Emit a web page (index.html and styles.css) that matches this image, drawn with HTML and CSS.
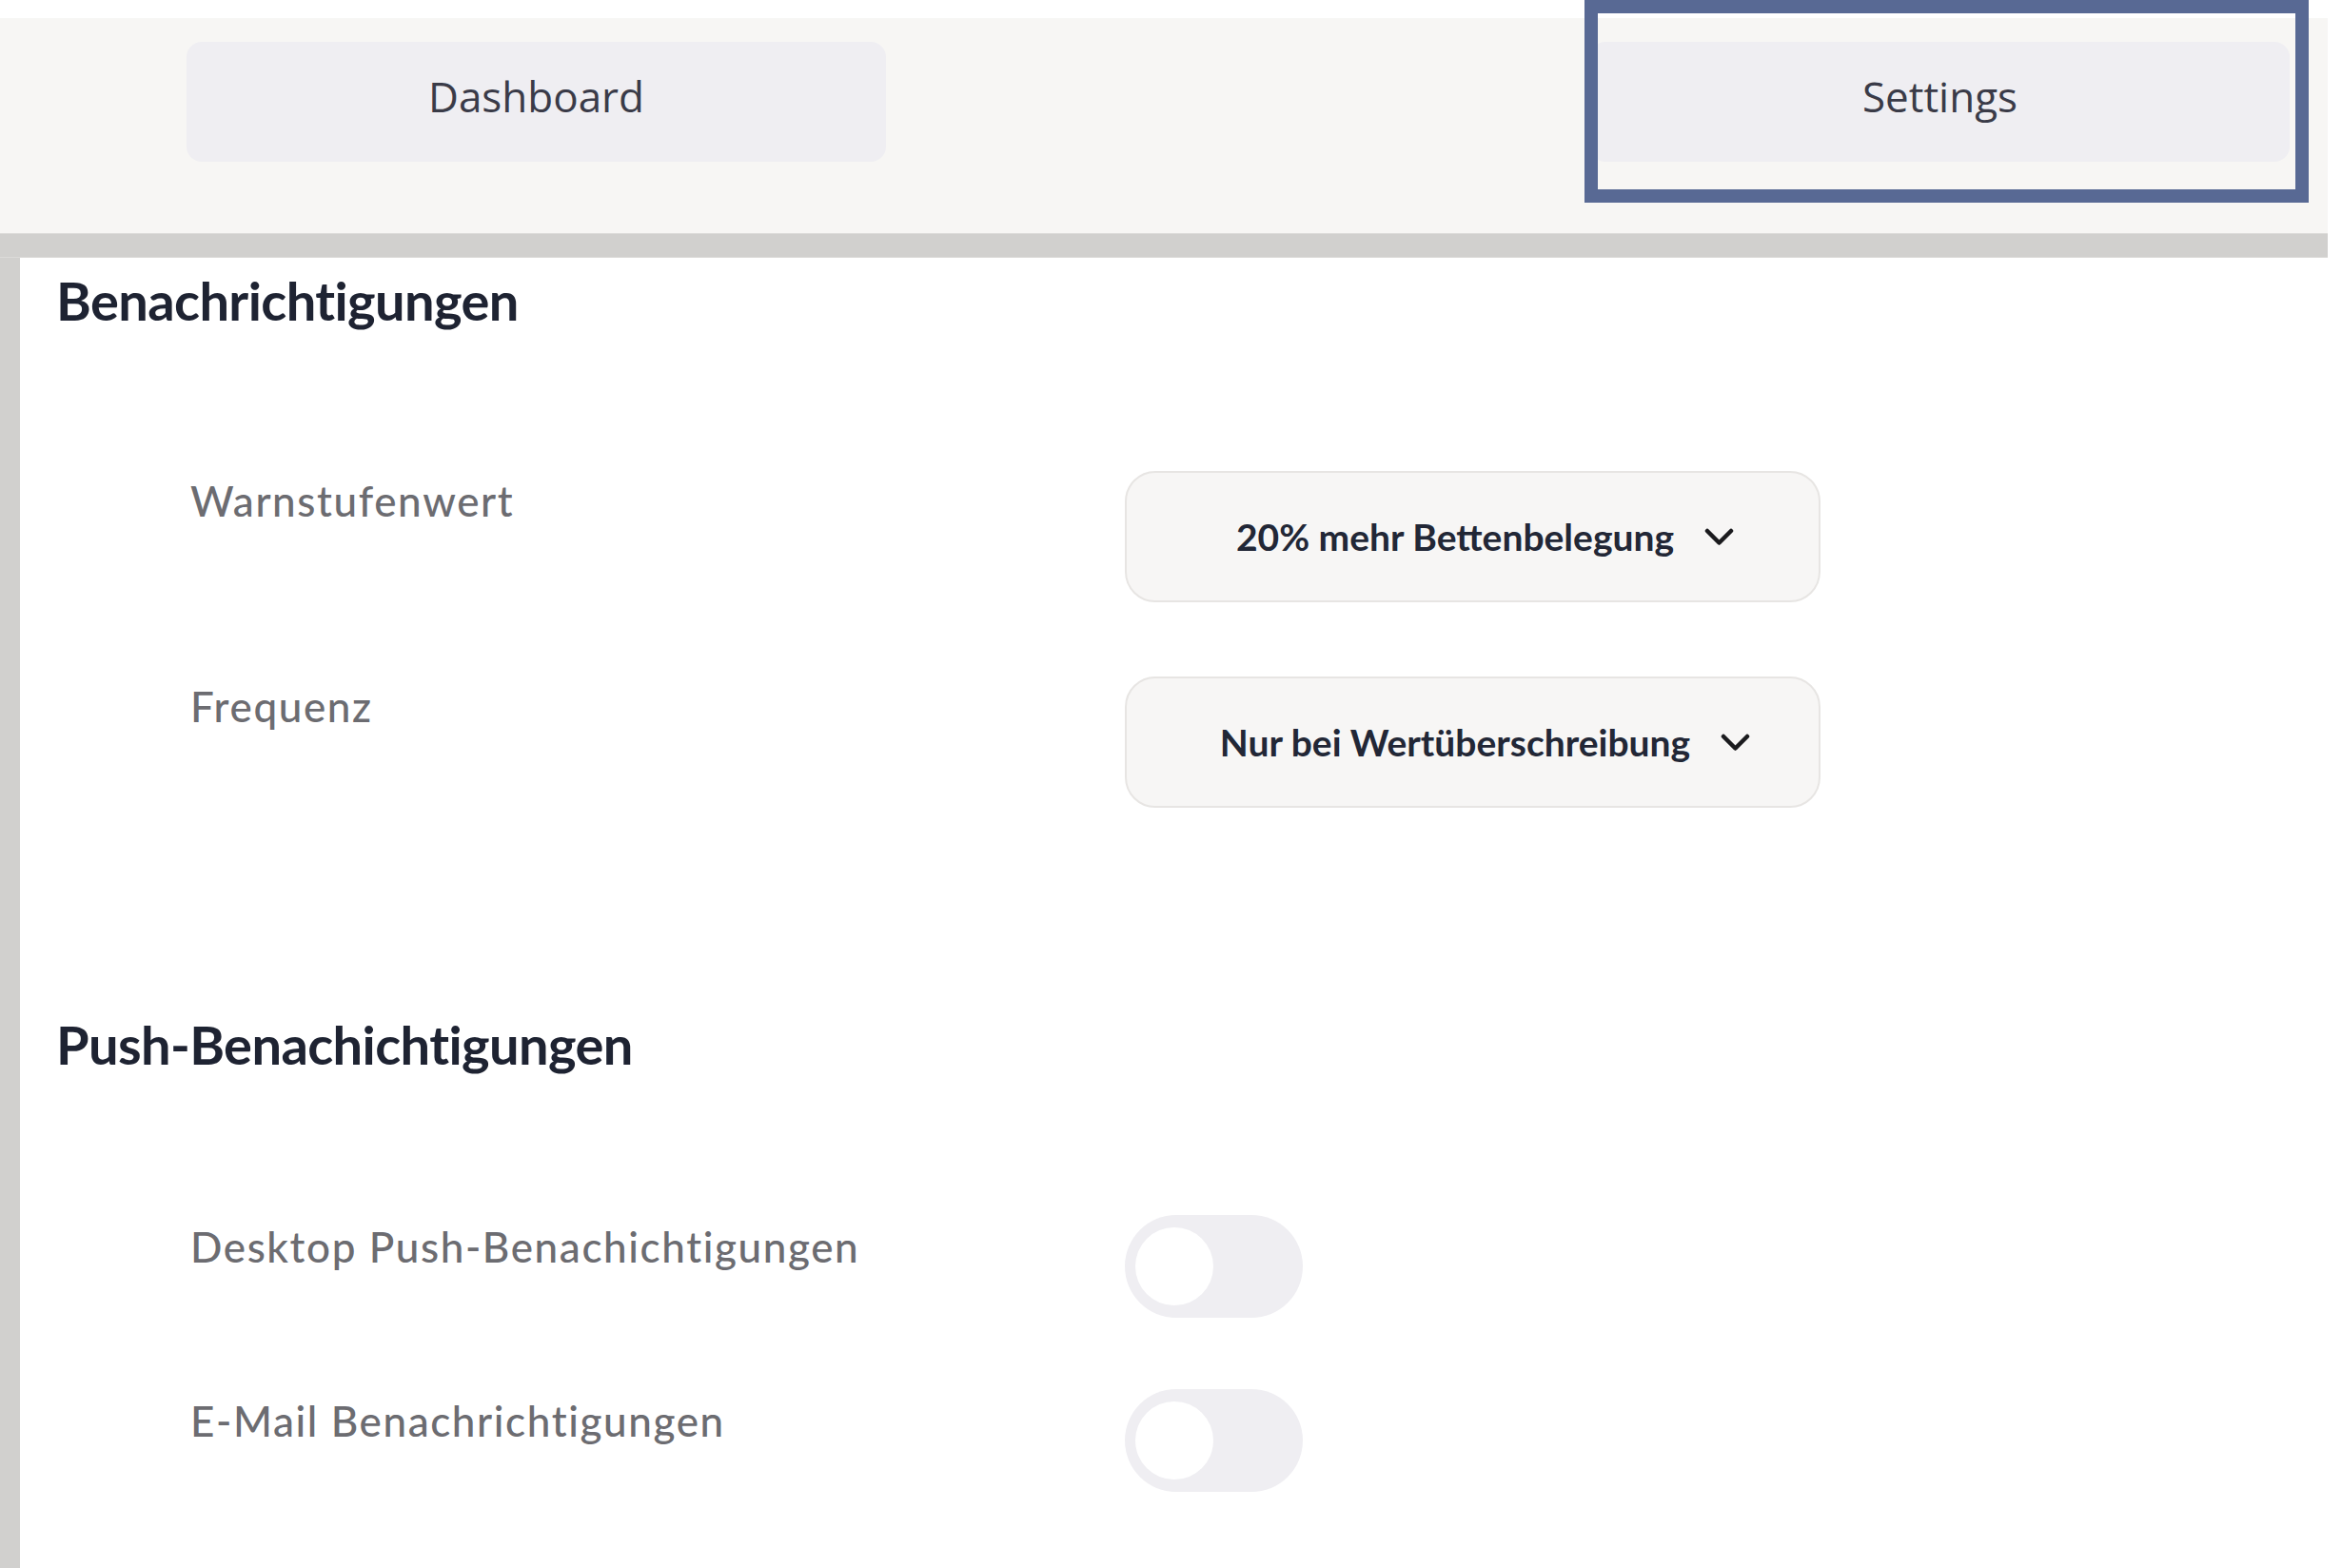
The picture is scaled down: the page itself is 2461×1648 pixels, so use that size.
FILE: index.html
```html
<!DOCTYPE html>
<html lang="de">
<head>
<meta charset="utf-8">
<title>Einstellungen</title>
<link rel="stylesheet" href="styles.css">
</head>
<body>
  <header class="topbar">
    <nav class="tabs">
      <button class="tab">Dashboard</button>
      <button class="tab tab-settings">Settings</button>
    </nav>
  </header>
  <div class="focus-ring"></div>
  <div class="divider"></div>

  <main class="content">
    <section class="group group-alerts">
      <h2 class="group-title">Benachrichtigungen</h2>

      <div class="setting-row">
        <span class="setting-label">Warnstufenwert</span>
        <div class="select">
          <span class="select-value">20% mehr Bettenbelegung</span>
          <svg class="chevron" width="31" height="19" viewBox="0 0 31 19"><polyline points="3,3 15.5,15.5 28,3" fill="none" stroke="#1b1b1e" stroke-width="4.5" stroke-linecap="round" stroke-linejoin="round"/></svg>
        </div>
      </div>

      <div class="setting-row">
        <span class="setting-label">Frequenz</span>
        <div class="select">
          <span class="select-value">Nur bei Wertüberschreibung</span>
          <svg class="chevron" width="31" height="19" viewBox="0 0 31 19"><polyline points="3,3 15.5,15.5 28,3" fill="none" stroke="#1b1b1e" stroke-width="4.5" stroke-linecap="round" stroke-linejoin="round"/></svg>
        </div>
      </div>
    </section>

    <section class="group group-push">
      <h2 class="group-title">Push-Benachichtigungen</h2>

      <div class="setting-row toggle-row">
        <span class="setting-label">Desktop Push-Benachichtigungen</span>
        <span class="switch"><span class="knob"></span></span>
      </div>

      <div class="setting-row toggle-row">
        <span class="setting-label">E-Mail Benachrichtigungen</span>
        <span class="switch"><span class="knob"></span></span>
      </div>
    </section>
  </main>
</body>
</html>
```

FILE: styles.css
```css
html, body {
  margin: 0;
  padding: 0;
  background: #ffffff;
}

body {
  position: relative;
  font-family: "Lato", "Noto Sans", sans-serif;
  min-height: 1648px;
}

/* ---- top navigation ---- */
.topbar {
  margin-top: 19px;
  margin-right: 15px;
  height: 226px;
  background: #f7f6f4;
  box-sizing: border-box;
  padding-top: 25px;
  padding-left: 196px;
}

.tabs {
  display: flex;
  gap: 740px;
}

.tab {
  width: 735px;
  height: 126px;
  border: none;
  border-radius: 16px;
  background: #efeef2;
  font-family: "Open Sans", "Noto Sans", sans-serif;
  font-size: 44px;
  font-weight: 400;
  color: #3a3b48;
  padding: 0 0 13px 0;
}

/* highlight frame around the active tab */
.focus-ring {
  position: absolute;
  left: 1665px;
  top: 0;
  width: 761px;
  height: 213px;
  box-sizing: border-box;
  border: 14px solid #586994;
}

.divider {
  margin-right: 15px;
  height: 26px;
  background: #d1d0ce;
  box-sizing: border-box;
  border-top: 1px solid #dcdbd9;
  border-bottom: 1px solid #dcdbd9;
}

/* ---- settings panel ---- */
.content {
  border-left: 21px solid #d1d0ce;
  min-height: calc(100vh - 271px);
  box-sizing: border-box;
  padding-left: 38px;
  padding-top: 17px;
}

.group-title {
  margin: 0;
  font-size: 56px;
  line-height: 56px;
  font-weight: 700;
  color: #1e2332;
  letter-spacing: -0.6px;
}

.group-alerts .group-title {
  margin-bottom: 151px;
}

.group-push {
  margin-top: 221px;
}

.group-push .group-title {
  margin-bottom: 151px;
}

.setting-row {
  display: grid;
  grid-template-columns: 982px auto;
  align-items: start;
  padding-left: 141px;
}

.setting-row + .setting-row {
  margin-top: 78px;
}

.toggle-row + .toggle-row {
  margin-top: 75px;
}

.setting-label {
  font-size: 44px;
  line-height: 44px;
  font-weight: 500;
  color: #6c6c71;
  margin-top: 9px;
  letter-spacing: 1.6px;
}

.toggle-row .setting-label {
  margin-top: 11px;
}

.select {
  width: 731px;
  height: 138px;
  box-sizing: border-box;
  border: 2px solid #e7e5e3;
  border-radius: 32px;
  background: #f7f6f5;
  display: flex;
  align-items: center;
  justify-content: center;
  gap: 32px;
  padding-left: 26px;
}

.select-value {
  font-size: 39px;
  font-weight: 700;
  color: #222736;
  letter-spacing: 0;
}

.chevron {
  display: block;
  flex: none;
}

.switch {
  display: block;
  width: 187px;
  height: 108px;
  border-radius: 54px;
  background: #efeef2;
  position: relative;
}

.knob {
  position: absolute;
  left: 11px;
  top: 13px;
  width: 82px;
  height: 82px;
  border-radius: 50%;
  background: #ffffff;
}
```
